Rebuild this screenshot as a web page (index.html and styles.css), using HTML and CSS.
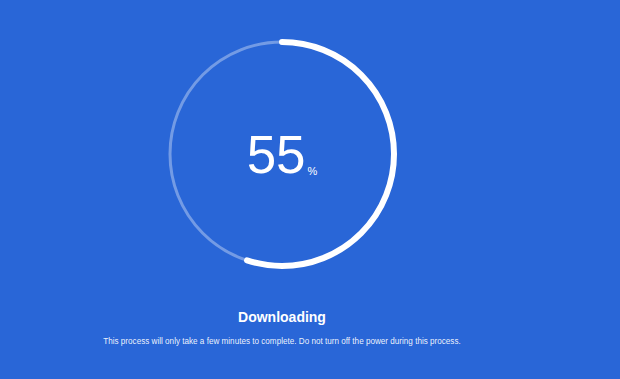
FILE: index.html
```html
<!DOCTYPE html>
<html>
<head>
<meta charset="utf-8">
<link rel="stylesheet" href="styles.css">
</head>
<body>
<main class="page">
  <div class="ring">
    <svg class="ring-svg" width="232" height="232" viewBox="0 0 232 232">
      <circle class="track" cx="116" cy="116" r="112"/>
      <circle class="bar" cx="116" cy="116" r="112" stroke-dasharray="387.04 703.72" transform="rotate(-90 116 116)"/>
    </svg>
    <div class="value"><span class="num">55</span><span class="pct">%</span></div>
  </div>
  <h1 class="title">Downloading</h1>
  <p class="desc">This process will only take a few minutes to complete. Do not turn off the power during this process.</p>
</main>
</body>
</html>
```
FILE: styles.css
```css
html, body {
  margin: 0;
  padding: 0;
}
body {
  background: #2966d7;
  width: 620px;
  height: 379px;
  overflow: hidden;
  font-family: "Liberation Sans", Arial, sans-serif;
  color: #fff;
}
.page {
  width: 564px;
  display: flex;
  flex-direction: column;
  align-items: center;
  padding-top: 38px;
}
.ring {
  position: relative;
  width: 232px;
  height: 232px;
}
.ring-svg {
  display: block;
}
.track {
  fill: none;
  stroke: rgba(255, 255, 255, 0.35);
  stroke-width: 3;
}
.bar {
  fill: none;
  stroke: #fff;
  stroke-width: 6;
  stroke-linecap: round;
}
.value {
  position: absolute;
  left: 0;
  right: 0;
  top: 85px;
  display: flex;
  justify-content: center;
  align-items: baseline;
}
.num {
  font-size: 53px;
  line-height: 64px;
  font-weight: 400;
}
.pct {
  font-size: 11px;
  margin-left: 2px;
  position: relative;
  top: 2px;
}
.title {
  margin: 38px 0 0;
  font-size: 14px;
  line-height: 18px;
  font-weight: 700;
}
.desc {
  margin: 10px 0 0;
  font-size: 8.15px;
  line-height: 12px;
  color: rgba(255, 255, 255, 0.92);
}
```
